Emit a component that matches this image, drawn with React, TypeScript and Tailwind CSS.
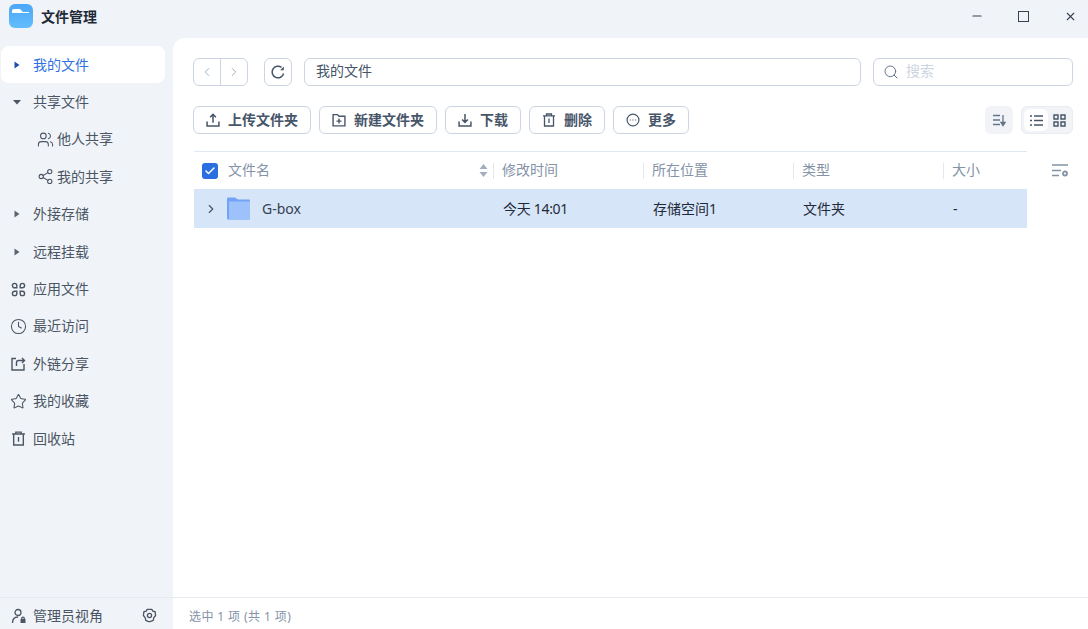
import type { ReactNode } from 'react'
import { ChevronLeft, ChevronRight, Search, Users, Share2, Clock, Star, Minus, X, Check } from 'lucide-react'

function Caret({ down, active }: { down?: boolean; active?: boolean }) {
  return (
    <svg width="8" height="8" viewBox="0 0 8 8" className="shrink-0">
      {down ? (
        <path d="M0 2h8L4 6.500z" fill="#4b5563" />
      ) : (
        <path d="M1.500 0.500v7L6.500 4z" fill={active ? '#1d4fa8' : '#5b6470'} />
      )}
    </svg>
  )
}

function NavRow({ icon, down, active, label, sub, caret }: { icon?: ReactNode; down?: boolean; active?: boolean; label: string; sub?: boolean; caret?: boolean }) {
  return (
    <div className={`flex h-[37.4px] items-center rounded-lg ${sub ? 'pl-[33px]' : 'pl-[10px]'} ${active ? 'bg-white text-[#2f72e0]' : 'text-[#4b5563]'}`}>
      <div className={`flex items-center ${sub ? 'w-[23px] justify-center' : 'w-[22px] justify-start'}`}>
        {caret ? <span className="ml-[2px] flex"><Caret down={down} active={active} /></span> : icon}
      </div>
      <span className="text-[14px] leading-none">{label}</span>
    </div>
  )
}

function ToolButton({ icon, label }: { icon: ReactNode; label: string }) {
  return (
    <button className="flex h-[28px] items-center gap-[8px] rounded-md border border-[#cbd5e1] bg-white px-[12px] text-[14px] font-bold leading-none text-[#475569]">
      {icon}
      <span>{label}</span>
    </button>
  )
}

function HeadCell({ label, width }: { label: string; width: string }) {
  return (
    <div className={`flex items-center ${width}`}>
      <div className="mr-[8px] h-[16px] w-px bg-[#e2e8f0]" />
      <span className="pb-[2px] text-[14px] leading-none text-[#8493a8]">{label}</span>
    </div>
  )
}

function TrashIcon({ size }: { size: string }) {
  return (
    <svg className={size} viewBox="0 0 14 14" fill="none" stroke="currentColor" strokeWidth="1.300">
      <path d="M1 2.800h12M4.500 2.800V1h5v1.800M2.500 2.800V13h9V2.800M7 5.500v4.500" />
    </svg>
  )
}

export default function App() {
  const side = 'h-[15px] w-[15px]'
  const lucide = '-ml-px h-[17px] w-[17px]'
  const tool = 'h-[14px] w-[14px]'
  return (
    <div className="flex h-[629px] w-[1088px] flex-col overflow-hidden bg-[#f0f4f9] font-['Noto_Sans','Noto_Sans_CJK_SC',sans-serif]">
      {/* title bar */}
      <div className="flex h-[38px] shrink-0 items-center pb-[6px]">
        <svg className="ml-[9px]" width="24" height="24" viewBox="0 0 24 24">
          <defs>
            <linearGradient id="logo" x1="0" y1="0" x2="0" y2="1">
              <stop offset="0" stopColor="#4ba6f7" />
              <stop offset="1" stopColor="#63bdfc" />
            </linearGradient>
          </defs>
          <rect width="24" height="24" rx="6" fill="url(#logo)" />
          <path d="M3 9V7a2 2 0 0 1 2-2h6l3 3h6v1z" fill="#ffffff" />
        </svg>
        <span className="ml-[8px] text-[14px] font-bold text-[#1f2937]">文件管理</span>
        <div className="ml-auto flex items-center text-[#374151]">
          <Minus className="mr-[34px] h-[14px] w-[14px]" strokeWidth={2} />
          <div className="mr-[35px] h-[11px] w-[11px] border-[1.5px] border-[#374151]" />
          <X className="mr-[11px] h-[13px] w-[13px]" strokeWidth={2} />
        </div>
      </div>

      <div className="flex min-h-0 flex-1">
        {/* sidebar */}
        <div className="flex w-[173px] shrink-0 flex-col">
          <div className="flex-1 pl-[1px] pr-[8px] pt-[8px]">
            <NavRow active caret label="我的文件" />
            <NavRow caret down label="共享文件" />
            <NavRow sub icon={<Users className="h-[17px] w-[17px]" strokeWidth={1.5} />} label="他人共享" />
            <NavRow sub icon={<Share2 className="h-[17px] w-[17px]" strokeWidth={1.5} />} label="我的共享" />
            <NavRow caret label="外接存储" />
            <NavRow caret label="远程挂载" />
            <NavRow
              icon={
                <svg className={side} viewBox="0 0 15 15" fill="none" stroke="currentColor" strokeWidth="1.400">
                  <path d="M5.800 5.800H3.600a2.200 2.200 0 1 1 2.200-2.200zM9.200 5.800h2.200a2.200 2.200 0 1 0-2.200-2.200zM5.800 9.200H3.600a2.200 2.200 0 1 0 2.200 2.200zM9.200 9.200h2.200a2.200 2.200 0 1 1-2.200 2.200z" />
                </svg>
              }
              label="应用文件"
            />
            <NavRow icon={<Clock className={lucide} strokeWidth={1.5} />} label="最近访问" />
            <NavRow
              icon={
                <svg className={side} viewBox="0 0 15 15" fill="none" stroke="currentColor" strokeWidth="1.400">
                  <path d="M5 2.500H1v11.500h12V8" />
                  <path d="M5.500 10V6.500A2 2 0 0 1 7.500 4.500H13M11 2l2.500 2.500L11 7" />
                </svg>
              }
              label="外链分享"
            />
            <NavRow icon={<Star className={lucide} strokeWidth={1.5} />} label="我的收藏" />
            <NavRow icon={<TrashIcon size={side} />} label="回收站" />
          </div>
          <div className="flex h-[32px] shrink-0 items-center border-t border-[#e5eaf1] pl-[11px] pr-[16px] pt-[4px] text-[#4b5563]">
            <svg className="h-[16px] w-[16px]" viewBox="0 0 16 16" fill="none" stroke="currentColor" strokeWidth="1.300">
              <circle cx="7" cy="4.500" r="3" />
              <path d="M1.500 15c0-4 2.500-6 5.500-6" />
              <rect x="9.500" y="11" width="5" height="4" rx="0.500" fill="currentColor" stroke="none" />
              <circle cx="12" cy="10.500" r="1.300" />
            </svg>
            <span className="ml-[6px] text-[14px] leading-none">管理员视角</span>
            <svg className="ml-auto h-[15px] w-[15px]" viewBox="0 0 16 16" fill="none" stroke="currentColor" strokeWidth="1.400">
              <path d="M5.500 1.500h5l1 1.800 2.500.7.500 4-2 2.500-.5 2.800-3.500 1.200H7l-3-1.200-.5-2.800-2-2.500.5-4 2.500-.7z" strokeLinejoin="round" />
              <circle cx="8" cy="8" r="2.200" />
            </svg>
          </div>
        </div>

        {/* main */}
        <div className="flex min-w-0 flex-1 flex-col rounded-tl-xl bg-white">
          <div className="flex-1 pl-[20px] pr-[15px] pt-[20px]">
            <div className="flex h-[28px] items-center">
              <div className="flex h-[28px] w-[55px] rounded-md border border-[#cbd5e1] text-[#94a3b8]">
                <div className="flex flex-1 items-center justify-center border-r border-[#cbd5e1]"><ChevronLeft className="h-[14px] w-[14px]" strokeWidth={1.5} /></div>
                <div className="flex flex-1 items-center justify-center"><ChevronRight className="h-[14px] w-[14px]" strokeWidth={1.5} /></div>
              </div>
              <div className="ml-[16px] flex h-[28px] w-[28px] items-center justify-center rounded-md border border-[#cbd5e1] text-[#475569]">
                <svg className="h-[14px] w-[14px]" viewBox="0 0 14 14" fill="none" stroke="currentColor" strokeWidth="1.500">
                  <path d="M12.600 8.500A5.800 5.800 0 1 1 10.500 2.400" />
                  <path d="M12.800 1.500v3.800H9.200z" fill="currentColor" stroke="none" />
                </svg>
              </div>
              <div className="ml-[12px] flex h-[28px] flex-1 items-center rounded-md border border-[#cbd5e1] pb-[2px] pl-[11px] text-[14px] leading-none text-[#475569]">我的文件</div>
              <div className="ml-[12px] flex h-[28px] w-[200px] items-center rounded-md border border-[#cbd5e1] pl-[9px] text-[14px] leading-none text-[#cbd5e1]">
                <Search className="mr-[7px] h-[16px] w-[16px] text-[#64748b]" strokeWidth={1.5} />
                <span className="pb-[2px]">搜索</span>
              </div>
            </div>

            <div className="mt-[20px] flex h-[28px] items-center gap-[8px]">
              <ToolButton
                icon={
                  <svg className={tool} viewBox="0 0 13 13" fill="none" stroke="currentColor" strokeWidth="1.400">
                    <path d="M6.500 9V1.500M3.800 4l2.700-2.700L9.200 4M1 8v4h11V8" />
                  </svg>
                }
                label="上传文件夹"
              />
              <ToolButton
                icon={
                  <svg className={tool} viewBox="0 0 13 13" fill="none" stroke="currentColor" strokeWidth="1.300">
                    <path d="M1 1.500h4l1.500 1.500H12v9H1zM6.500 5.200v4.600M4.200 7.500h4.600" />
                  </svg>
                }
                label="新建文件夹"
              />
              <ToolButton
                icon={
                  <svg className={tool} viewBox="0 0 13 13" fill="none" stroke="currentColor" strokeWidth="1.400">
                    <path d="M6.500 1v7.500M3.800 6l2.700 2.700L9.200 6M1 8v4h11V8" />
                  </svg>
                }
                label="下载"
              />
              <ToolButton icon={<TrashIcon size={tool} />} label="删除" />
              <ToolButton
                icon={
                  <svg className={tool} viewBox="0 0 13 13" fill="none" stroke="currentColor" strokeWidth="1.100">
                    <circle cx="6.500" cy="6.500" r="5.500" />
                    <path d="M3.500 6.500h1M6 6.500h1M8.500 6.500h1" />
                  </svg>
                }
                label="更多"
              />
              <div className="ml-auto flex h-[28px] w-[28px] items-center justify-center rounded-md bg-[#f1f3f6] text-[#64748b]">
                <svg className="h-[14px] w-[14px]" viewBox="0 0 14 14" fill="none" stroke="currentColor" strokeWidth="1.300">
                  <path d="M1 2.500h7M1 7h7M1 11.500h7M11 2v8" />
                  <path d="M9 9.500h4L11 12.500z" fill="currentColor" />
                </svg>
              </div>
              <div className="flex h-[28px] w-[52px] items-center rounded-md border border-[#e9edf2] bg-[#f1f3f6] p-[2px] text-[#475569]">
                <div className="flex h-full w-[24px] items-center justify-center rounded-md bg-white">
                  <svg className="h-[13px] w-[13px]" viewBox="0 0 13 13" fill="none" stroke="currentColor" strokeWidth="1.400">
                    <path d="M0 2h2M4 2h9M0 6.500h2M4 6.500h9M0 11h2M4 11h9" />
                  </svg>
                </div>
                <div className="flex h-full flex-1 items-center justify-center">
                  <svg className="h-[13px] w-[13px]" viewBox="0 0 13 13" fill="none" stroke="currentColor" strokeWidth="1.400">
                    <path d="M1 1h4v4H1zM8 1h4v4H8zM1 8h4v4H1zM8 8h4v4H8z" />
                  </svg>
                </div>
              </div>
            </div>

            <div className="mt-[17px] flex">
              <div className="ml-[1px] w-[833px]">
                <div className="flex h-[38px] items-center border-t border-[#e2e8f0]">
                  <div className="flex w-[299px] items-center pl-[8px]">
                    <div className="mr-[10px] flex h-[16px] w-[16px] items-center justify-center rounded-[3px] bg-[#2a6fdf]"><Check className="h-[12px] w-[12px] text-white" strokeWidth={3} /></div>
                    <span className="pb-[2px] text-[14px] leading-none text-[#8493a8]">文件名</span>
                    <svg className="ml-auto mr-[5px]" width="9" height="15" viewBox="0 0 9 15" fill="#a3afbf">
                      <path d="M4.500 1L8.500 6h-8zM0.500 9h8L4.500 14z" />
                    </svg>
                  </div>
                  <HeadCell width="w-[150px]" label="修改时间" />
                  <HeadCell width="w-[150px]" label="所在位置" />
                  <HeadCell width="w-[150px]" label="类型" />
                  <HeadCell width="w-[84px]" label="大小" />
                </div>
                <div className="flex h-[39px] items-center bg-[#d6e5f8] text-[14px] leading-none text-[#1f2937]">
                  <div className="flex w-[309px] items-center pl-[10px]">
                    <ChevronRight className="h-[14px] w-[14px] text-[#475569]" strokeWidth={2} />
                    <svg className="ml-[9px]" width="23" height="24" viewBox="0 0 23 24">
                      <path d="M0 1.500a1 1 0 0 1 1-1h7l3 2h11a1 1 0 0 1 1 1v18a1 1 0 0 1-1 1H1a1 1 0 0 1-1-1z" fill="#72a3f6" />
                      <path d="M2 4.500h21v17a1 1 0 0 1-1 1H2z" fill="#9cc1fb" />
                    </svg>
                    <span className="ml-[12px] text-[#374151]">G-box</span>
                  </div>
                  <div className="w-[150px] tracking-[-0.3px]">今天 14:01</div>
                  <div className="w-[150px]">存储空间1</div>
                  <div className="w-[150px]">文件夹</div>
                  <div>-</div>
                </div>
              </div>
              <div className="ml-[25px] mt-[13px] text-[#8493a8]">
                <svg width="17" height="13" viewBox="0 0 17 13" fill="none" stroke="currentColor" strokeWidth="1.400">
                  <path d="M0 1h16M0 6.500h9M0 11.500h7" />
                  <circle cx="13" cy="9.500" r="2" strokeWidth="1.800" />
                </svg>
              </div>
            </div>
          </div>
          <div className="flex h-[32px] shrink-0 items-center border-t border-[#e5eaf1] pl-[16px] pt-[6px] text-[12px] leading-none tracking-[0.4px] text-[#8493a8]">选中 1 项 (共 1 项)</div>
        </div>
      </div>
    </div>
  )
}
